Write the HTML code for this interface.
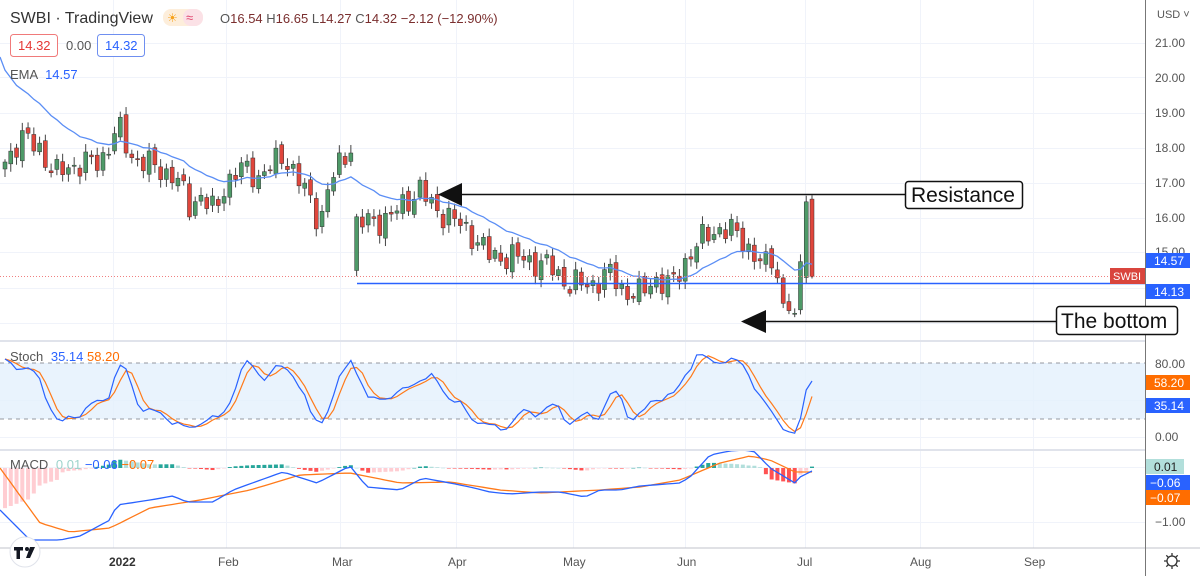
<!DOCTYPE html>
<html><head><meta charset="utf-8"><style>
body{margin:0;background:#fff;width:1200px;height:576px;overflow:hidden;font-family:"Liberation Sans",sans-serif}
svg text{font-family:"Liberation Sans",sans-serif}
</style></head><body>
<svg id="s" width="1200" height="576" xmlns="http://www.w3.org/2000/svg">
<rect width="1200" height="576" fill="#fff"/>
<g id="grid" stroke="#f0f3fa" stroke-width="1"></g>
<rect x="0" y="363" width="1145" height="56" fill="#e3f0fc" opacity="0.8"/>
<line x1="0" y1="363" x2="1145" y2="363" stroke="#9598a1" stroke-dasharray="4,4"/>
<line x1="0" y1="419" x2="1145" y2="419" stroke="#9598a1" stroke-dasharray="4,4"/>
<g id="ch"></g>
<line x1="357" y1="283.5" x2="1145" y2="283.5" stroke="#2962ff" stroke-width="1.6"/>
<line x1="0" y1="276.5" x2="1110" y2="276.5" stroke="#f08080" stroke-dasharray="1,2"/>
<line x1="0" y1="341" x2="1145" y2="341" stroke="#e0e3eb" stroke-width="2"/>
<line x1="0" y1="450" x2="1145" y2="450" stroke="#e0e3eb" stroke-width="2"/>
<line x1="0" y1="548" x2="1200" y2="548" stroke="#c0c3cb" stroke-width="1"/>
<line x1="1145.5" y1="0" x2="1145.5" y2="576" stroke="#777" stroke-width="1"/>
<g font-size="12" fill="#555">
<text x="1157" y="18" font-size="11">USD ˅</text>
<text x="1155" y="47">21.00</text><text x="1155" y="82">20.00</text><text x="1155" y="117">19.00</text>
<text x="1155" y="152">18.00</text><text x="1155" y="187">17.00</text><text x="1155" y="222">16.00</text>
<text x="1155" y="256">15.00</text><text x="1155" y="327">13</text>
<text x="1155" y="368">80.00</text><text x="1155" y="441">0.00</text><text x="1155" y="526">−1.00</text>
<text x="109" y="566" fill="#333" font-weight="bold">2022</text>
<text x="218" y="566">Feb</text><text x="332" y="566">Mar</text><text x="448" y="566">Apr</text>
<text x="563" y="566">May</text><text x="677" y="566">Jun</text><text x="797" y="566">Jul</text>
<text x="910" y="566">Aug</text><text x="1024" y="566">Sep</text>
</g>
<g font-size="12" fill="#fff">
<rect x="1146" y="253" width="44" height="15" fill="#2962ff"/><text x="1154" y="265">14.57</text>
<rect x="1146" y="284" width="44" height="15" fill="#2962ff"/><text x="1154" y="296">14.13</text>
<rect x="1110" y="268" width="35" height="16" fill="#d9453d"/><text x="1113" y="280" font-size="11">SWBI</text>
<rect x="1146" y="375" width="44" height="15" fill="#ff6d00"/><text x="1154" y="387">58.20</text>
<rect x="1146" y="398" width="44" height="15" fill="#2962ff"/><text x="1154" y="410">35.14</text>
<rect x="1146" y="459" width="38" height="15" fill="#b2dfdb"/><text x="1154" y="471" fill="#222">0.01</text>
<rect x="1146" y="475" width="44" height="15" fill="#2962ff"/><text x="1150" y="487">−0.06</text>
<rect x="1146" y="490" width="44" height="15" fill="#ff6d00"/><text x="1150" y="502">−0.07</text>
</g>
<g transform="translate(1172,561)" fill="none" stroke="#333" stroke-width="1.3"><circle r="5"/><path d="M0-8V-5M0 5V8M-8 0H-5M5 0H8M-5.7-5.7L-3.5-3.5M3.5 3.5L5.7 5.7M-5.7 5.7L-3.5 3.5M3.5-3.5L5.7-5.7"/></g>
<text x="10" y="23" font-size="16" fill="#333">SWBI · TradingView</text>
<rect x="163" y="9" width="40" height="17" rx="8" fill="#fdeedb"/><rect x="183" y="9" width="20" height="17" rx="8" fill="#fbe1e6"/>
<text x="167" y="22" font-size="12" fill="#f7a21b">☀</text><text x="186" y="22" font-size="13" fill="#e0456e">≈</text>
<text x="220" y="23" font-size="13" fill="#7a2e2e"><tspan fill="#555">O</tspan>16.54 <tspan fill="#555">H</tspan>16.65 <tspan fill="#555">L</tspan>14.27 <tspan fill="#555">C</tspan>14.32 −2.12 (−12.90%)</text>
<rect x="10.5" y="34.5" width="47" height="22" rx="3" fill="#fff" stroke="#f07a7a"/><text x="18" y="50" font-size="13" fill="#e53935">14.32</text>
<text x="66" y="50" font-size="13" fill="#555">0.00</text>
<rect x="97.5" y="34.5" width="47" height="22" rx="3" fill="#fff" stroke="#6f8ff0"/><text x="105" y="50" font-size="13" fill="#2962ff">14.32</text>
<text x="10" y="79" font-size="13" fill="#555">EMA <tspan fill="#2962ff" dx="4">14.57</tspan></text>
<text x="10" y="361" font-size="13" fill="#555">Stoch <tspan fill="#2962ff" dx="4">35.14</tspan> <tspan fill="#ff6d00">58.20</tspan></text>
<line x1="455" y1="194.5" x2="906" y2="194.5" stroke="#111" stroke-width="1.5"/>
<path d="M438 194.5L462 183V206Z" fill="#111"/>
<rect x="905.5" y="181.5" width="117" height="27" rx="3" fill="#fff" stroke="#111" stroke-width="1.5"/>
<text x="911" y="202" font-size="21" fill="#111">Resistance</text>
<line x1="760" y1="321.5" x2="1058" y2="321.5" stroke="#111" stroke-width="1.5"/>
<path d="M741 321.5L766 310V333Z" fill="#111"/>
<rect x="1056.5" y="306.5" width="121" height="28" rx="3" fill="#fff" stroke="#111" stroke-width="1.5"/>
<text x="1061" y="328" font-size="21" fill="#111">The bottom</text>
<g id="top"></g>
</svg>
<script>
var NS="http://www.w3.org/2000/svg",g=document.getElementById('ch'),gr=document.getElementById('grid'),tp=document.getElementById('top');
function el(t,a,p){var e=document.createElementNS(NS,t);for(var k in a)e.setAttribute(k,a[k]);(p||g).appendChild(e);return e;}
[43,77,113,148,183,218,252,288,323,363,400,437,467,522].forEach(function(y){el('line',{x1:0,x2:1145,y1:y+.5,y2:y+.5},gr)});
[113,226,340,456,573,685,805,920,1033].forEach(function(x){el('line',{x1:x+.5,x2:x+.5,y1:0,y2:548},gr)});
var kp=[[5,17.6],[20,18.3],[40,18],[55,17.2],[70,17.5],[100,17.6],[118,18.6],[130,17.8],[150,17.5],[175,17.2],[190,16.3],[200,16.7],[215,16.1],[225,17],[240,17.4],[260,17.2],[285,17.8],[300,17.0],[310,16.5],[320,15.9],[330,17],[345,17.8],[351,18.1],[356,15.8],[370,15.9],[390,16.0],[410,16.6],[420,16.8],[430,16.4],[450,16.0],[470,15.6],[490,14.9],[510,14.9],[530,14.8],[550,14.6],[570,14.1],[590,14.1],[610,14.4],[625,13.9],[640,13.8],[655,14.3],[670,14.0],[690,15.0],[710,15.6],[720,15.7],[740,15.5],[760,14.7],[770,14.6],[776,14.5],[782,13.6],[788,13.4],[794,13.1],[800,14.6],[806,16.55],[812,14.32]];
function ip(arr,x){if(x<=arr[0][0])return arr[0][1];for(var i=1;i<arr.length;i++)if(x<=arr[i][0]){var a=arr[i-1],b=arr[i];return a[1]+(b[1]-a[1])*(x-a[0])/(b[0]-a[0]);}return arr[arr.length-1][1];}
var N=141,st=807/140,C=[],O=[],H=[],L=[],X=[];
function Y(p){return 43+(21-p)*35;}
var prev=17.4;
for(var i=0;i<N;i++){var x=5+i*st;X.push(x);var c=ip(kp,x);if(x<770)c+=0.28*Math.sin(i*2.3)+0.18*Math.sin(i*5.1);
var o=prev+0.1*Math.sin(i*3.7);if(Math.abs(x-356)<3)o=14.5;if(x>803&&x<809){o=14.3;}if(x>=809){o=16.54;c=14.32;}
C.push(c);O.push(o);H.push(Math.max(o,c)+0.08+0.15*Math.abs(Math.sin(i*1.7)));L.push(Math.min(o,c)-0.08-0.15*Math.abs(Math.cos(i*2.9)));prev=c;}
H[N-1]=16.65;L[N-1]=14.27;
var e=20.5,E=[];for(i=0;i<N;i++){e=e+(C[i]-e)*2/21;E.push(e);}
var d='M0 '+Y(20.6);for(i=0;i<N;i++)d+=' L'+X[i].toFixed(1)+' '+Y(E[i]).toFixed(1);
for(i=0;i<N;i++){var up=C[i]>=O[i],col=up?'#4e9a68':'#e0463c';
el('line',{x1:X[i],x2:X[i],y1:Y(H[i]),y2:Y(L[i]),stroke:'#444','stroke-width':1});
var t=Y(Math.max(O[i],C[i])),b=Y(Math.min(O[i],C[i]));el('rect',{x:X[i]-2,y:t,width:4,height:Math.max(1,b-t),fill:col,stroke:'#333','stroke-width':.5});}
el('path',{d:d,fill:'none',stroke:'#5b8ef5','stroke-width':1.3});
var K=[],Kr=[];for(i=0;i<N;i++){var hh=-1e9,ll=1e9;for(var j=Math.max(0,i-13);j<=i;j++){hh=Math.max(hh,H[j]);ll=Math.min(ll,L[j]);}Kr.push(100*(C[i]-ll)/(hh-ll||1));}
for(i=0;i<N;i++){var s=0,n=0;for(j=Math.max(0,i-2);j<=i;j++){s+=Kr[j];n++;}K.push(s/n);}
var D=[];for(i=0;i<N;i++){s=0;n=0;for(j=Math.max(0,i-2);j<=i;j++){s+=K[j];n++;}D.push(s/n);}
function SY(v){return 437-v*0.925;}
var pk='',pd='';for(i=0;i<N;i++){pk+=(i?'L':'M')+X[i].toFixed(1)+' '+SY(K[i]).toFixed(1);pd+=(i?'L':'M')+X[i].toFixed(1)+' '+SY(D[i]).toFixed(1);}
el('path',{d:pd,fill:'none',stroke:'#ff7a1a','stroke-width':1.2});
el('path',{d:pk,fill:'none',stroke:'#2962ff','stroke-width':1.2});
var mb=[[0,510],[30,540],[60,540],[80,536],[110,520],[117,505],[150,500],[173,496],[187,502],[213,502],[233,490],[283,472],[317,483],[350,466],[367,487],[400,490],[423,478],[450,483],[470,487],[490,492],[510,494],[540,492],[560,492],[585,497],[600,490],[620,490],[640,486],[680,483],[690,477],[710,455],[730,451],[745,450],[755,452],[770,468],[795,483],[800,477],[812,471]];
var mo=[[0,468],[40,523],[70,532],[110,528],[150,508],[200,500],[250,490],[300,475],[350,473],[400,483],[450,482],[500,490],[540,493],[600,490],[640,487],[680,480],[720,463],[750,456],[770,460],[795,472],[812,472]];
var pb='M0 '+ip(mb,0),po='M0 '+ip(mo,0);
for(i=0;i<N;i++){var yb=ip(mb,X[i]),yo=ip(mo,X[i]);pb+=' L'+X[i].toFixed(1)+' '+yb.toFixed(1);po+=' L'+X[i].toFixed(1)+' '+yo.toFixed(1);
var f=X[i]>755?1.4:(X[i]<60?1:0.45);
var h=(yo-yb)*f,hp=i?(ip(mo,X[i-1])-ip(mb,X[i-1]))*f:h;var cl=h>=0?(h>=hp?'#26a69a':'#b2dfdb'):(h<hp?'#ff5252':'#ffcdd2');
el('rect',{x:X[i]-2,y:h>=0?468-h:468,width:4,height:Math.max(0.5,Math.abs(h)),fill:cl});}
el('path',{d:po,fill:'none',stroke:'#ff7a1a','stroke-width':1.3});
el('path',{d:pb,fill:'none',stroke:'#2962ff','stroke-width':1.3});
var lg=el('g',{transform:'translate(25,552)'},tp);
el('circle',{r:15,fill:'#fff',stroke:'#e0e3eb'},lg);
el('path',{d:'M-11-5h9v3.5h-3v8.5h-3.5v-8.5h-2.5z M5-5h5l-5 11h-4z',fill:'#131722'},lg);
el('circle',{cx:2,cy:-3,r:2,fill:'#131722'},lg);
var tx=el('text',{x:10,y:469,'font-size':13,fill:'#555'},tp);
tx.innerHTML='MACD <tspan fill="#9ed3cc" dx="4">0.01</tspan> <tspan fill="#2962ff">−0.06</tspan> <tspan fill="#ff6d00">−0.07</tspan>';
</script>
</body></html>
